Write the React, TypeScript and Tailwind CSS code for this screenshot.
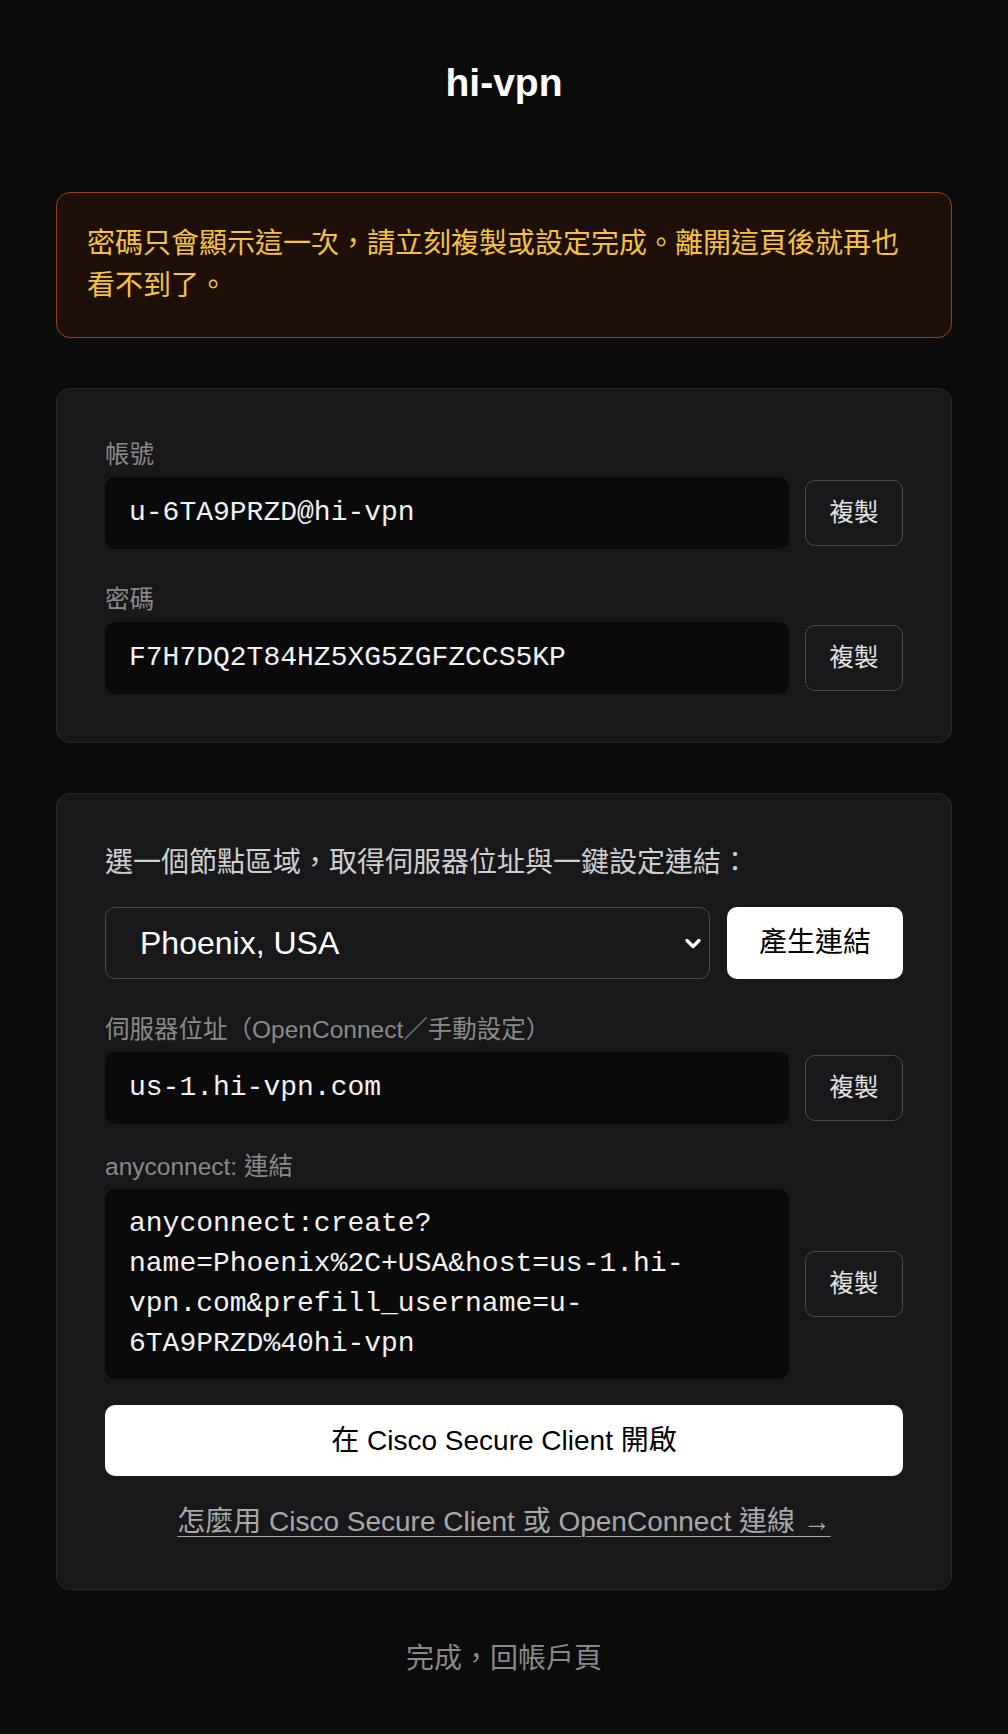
import React from "react";

const SANS = "font-['Liberation_Sans','Noto_Sans_CJK_TC',sans-serif]";
const MONO = "font-['Liberation_Mono','Noto_Sans_CJK_TC',monospace]";

function CopyButton() {
  return (
    <button
      className={`w-[98px] h-[66px] shrink-0 rounded-[10px] border border-[#4a4a4c] bg-transparent text-[24.5px] leading-[36px] text-[#e2e2e2] ${SANS}`}
    >
      複製
    </button>
  );
}

function Label({ children, className = "" }: { children: React.ReactNode; className?: string }) {
  return <div className={`text-[24.5px] leading-[36px] text-[#8a8a8a] mb-[4px] ${className}`}>{children}</div>;
}

function Field({ value }: { value: string }) {
  return (
    <div className="flex items-center gap-4">
      <div
        className={`flex-1 h-[72px] rounded-[10px] bg-[#0a0a0a] px-6 flex items-center text-[28px] leading-[40px] text-[#f2f2f2] ${MONO}`}
      >
        {value}
      </div>
      <CopyButton />
    </div>
  );
}

export default function App() {
  return (
    <div lang="zh-TW" className={`min-h-[1734px] bg-[#0b0b0c] ${SANS}`}>
      <div className="mx-auto max-w-[896px] pt-[56px] pb-[56px]">
        <h1 className="text-center text-[39px] leading-[54px] font-bold text-white mb-[82px]">hi-vpn</h1>

        <div className="rounded-[14px] border border-[#94420f] bg-[#1e1008] p-[30px] text-[28px] leading-[42px] text-[#f5c243]">
          密碼只會顯示這一次，請立刻複製或設定完成。離開這頁後就再也看不到了。
        </div>

        <div className="mt-[50px] rounded-[14px] border border-[#2b2b2d] bg-[#18181a] p-12">
          <Label>帳號</Label>
          <Field value="u-6TA9PRZD@hi-vpn" />
          <Label className="mt-[33px]">密碼</Label>
          <Field value="F7H7DQ2T84HZ5XG5ZGFZCCS5KP" />
        </div>

        <div className="mt-[50px] rounded-[14px] border border-[#2b2b2d] bg-[#18181a] px-12 pt-12 pb-[46px]">
          <div className="text-[28px] leading-[42px] text-[#cfcfcf] mb-[23px]">
            選一個節點區域，取得伺服器位址與一鍵設定連結：
          </div>
          <div className="flex items-center gap-[17px]">
            <div className="relative flex-1 h-[72px] rounded-[10px] border border-[#4a4a4c] flex items-center pl-[34px] pr-[6px]">
              <span className="flex-1 text-[32px] leading-[40px] text-white">Phoenix, USA</span>
              <svg width="20" height="20" viewBox="0 0 20 20" className="shrink-0">
                <polyline points="4,7.5 10,13.5 16,7.5" fill="none" stroke="#ffffff" strokeWidth="3.4" strokeLinecap="round" strokeLinejoin="round" />
              </svg>
            </div>
            <button className="w-[176px] h-[72px] shrink-0 rounded-[10px] bg-white text-black text-[28px] leading-[40px]">
              產生連結
            </button>
          </div>

          <Label className="mt-[33px]">伺服器位址（OpenConnect／手動設定）</Label>
          <Field value="us-1.hi-vpn.com" />

          <Label className="mt-[25px]">anyconnect: 連結</Label>
          <div className="flex items-center gap-4">
            <div
              className={`flex-1 rounded-[10px] bg-[#0a0a0a] px-6 py-[15px] text-[28px] leading-[40px] text-[#f2f2f2] ${MONO}`}
            >
              anyconnect:create?
              <br />
              name=Phoenix%2C+USA&amp;host=us-1.hi-
              <br />
              vpn.com&amp;prefill_username=u-
              <br />
              6TA9PRZD%40hi-vpn
            </div>
            <CopyButton />
          </div>

          <button className="mt-[26px] w-full h-[71px] rounded-[10px] bg-white text-black text-[28px] leading-[40px]">
            在 Cisco Secure Client 開啟
          </button>

          <div className="mt-[25px] text-center text-[28px] leading-[42px]">
            <a href="#" className="text-[#a9a9a9] underline underline-offset-[5px] decoration-1">
              怎麼用 Cisco Secure Client 或 OpenConnect 連線 →
            </a>
          </div>
        </div>

        <div className="mt-[48px] text-center text-[28px] leading-[42px] text-[#8a8a8a]">完成，回帳戶頁</div>
      </div>
    </div>
  );
}
